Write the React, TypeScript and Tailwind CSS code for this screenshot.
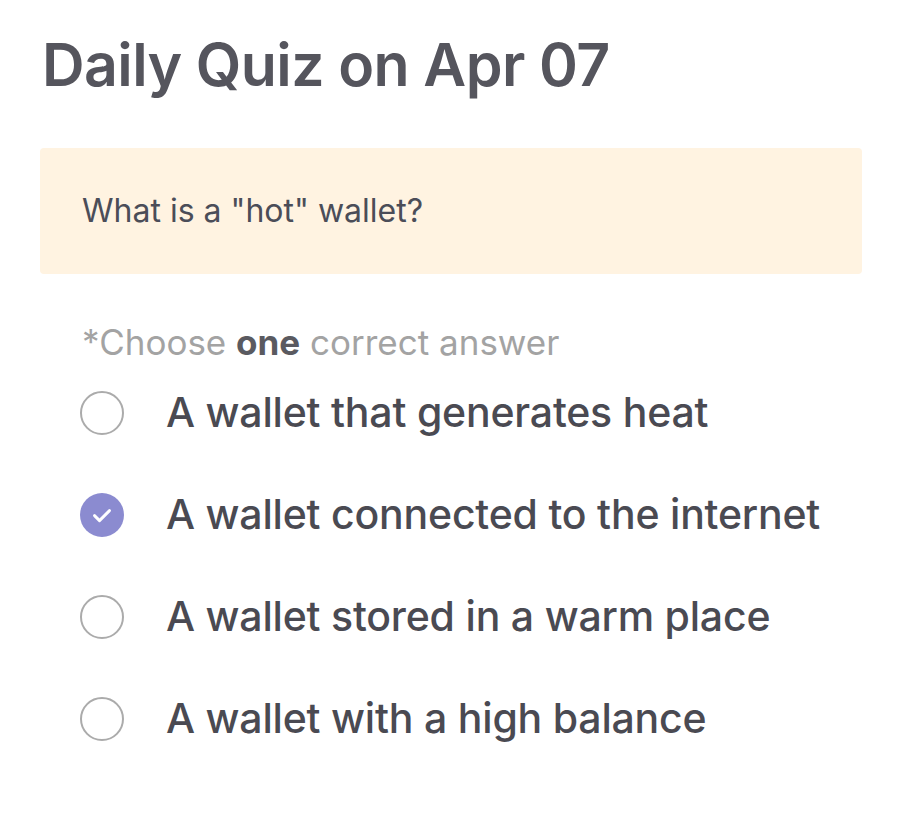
import React from "react";

const options = [
  "A wallet that generates heat",
  "A wallet connected to the internet",
  "A wallet stored in a warm place",
  "A wallet with a high balance",
];

export default function App() {
  return (
    <div className="w-[902px] h-[815px] bg-white pl-[40px] pr-[40px] pt-[30px]" style={{ fontFamily: "Inter, 'Noto Sans', sans-serif" }}>
      <h1 className="text-[59px] leading-[70px] font-semibold text-[#55555d] tracking-[-0.6px] pl-[2px]">Daily Quiz on Apr 07</h1>
      <div className="mt-[48px] h-[126px] bg-[#fff3e1] rounded-[4px] flex items-center pl-[42px]">
        <span className="text-[32px] text-[#4b4d58] tracking-[0px]">What is a "hot" wallet?</span>
      </div>
      <div className="mt-[48px] pl-[42px] text-[35px] leading-[40px] text-[#a3a3a3]">
        *Choose <span className="font-bold text-[#5a5a60]">one</span> correct answer
      </div>
      <div className="mt-0 flex flex-col">
        {options.map((o, i) => (
          <div key={o} className="h-[102px] flex items-center pl-[40px]">
            {i === 1 ? (
              <div className="w-[44px] h-[44px] rounded-full bg-[#8b8bd0] flex items-center justify-center">
                <svg width="30" height="30" viewBox="0 0 24 24" fill="none" stroke="white" strokeWidth="2.3" strokeLinecap="round" strokeLinejoin="round">
                  <path d="M6 12.5l4 4L18 8.5" />
                </svg>
              </div>
            ) : (
              <div className="w-[44px] h-[44px] rounded-full border-[2.5px] border-[#ababab]" />
            )}
            <span className="ml-[42px] text-[41px] font-medium text-[#4a4a52] tracking-[-0.2px]">{o}</span>
          </div>
        ))}
      </div>
    </div>
  );
}
